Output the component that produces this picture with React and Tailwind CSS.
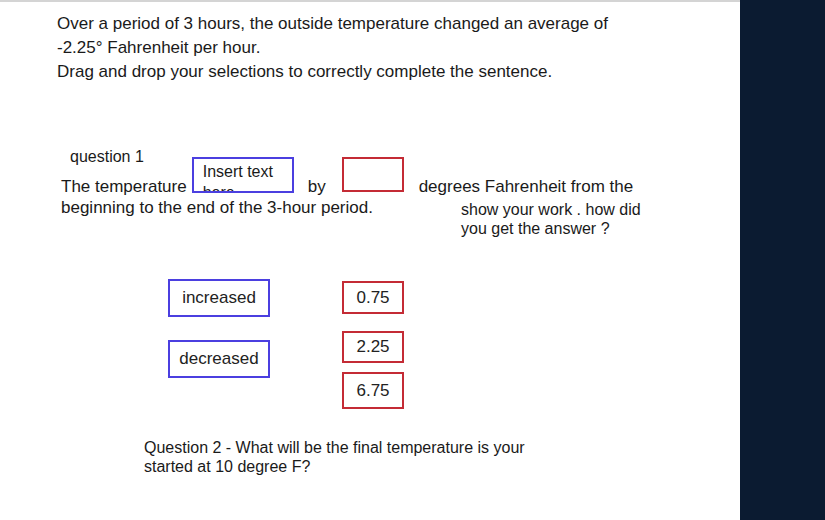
import React from "react";

const sans = { fontFamily: '"Liberation Sans", Arial, sans-serif' };

function Chip({ label, tone, className }) {
  const border = tone === "blue" ? "border-[#4b3fe0] w-[102px] h-[38px]" : "border-[#c42b35] w-[62px]";
  return (
    <div className={`flex items-center justify-center border-2 bg-white text-[17px] text-[#222] ${border} ${className || ""}`}>
      {label}
    </div>
  );
}

export default function App() {
  return (
    <div className="flex w-[825px] h-[520px] overflow-hidden bg-white text-[#1a1a1a]" style={sans}>
      <main className="flex flex-1 flex-col border-t-2 border-[#d4d4d4]">
        <div className="ml-[57px] mt-[10px] text-[17px] leading-[24px]">
          <p>Over a period of 3 hours, the outside temperature changed an average of</p>
          <p>-2.25° Fahrenheit per hour.</p>
          <p>Drag and drop your selections to correctly complete the sentence.</p>
        </div>

        {/* question 1 */}
        <section className="mt-[62px] ml-[61px]">
          <div className="flex items-start text-[17px] leading-[21px]">
            <div className="flex flex-col">
              <span className="ml-[9px] text-[16px]">question 1</span>
              <span className="mt-[9px]">The temperature</span>
            </div>
            <div className="ml-[5px] mt-[11px] w-[102px] h-[36px] overflow-hidden border-2 border-[#4b3fe0] pl-[9px] pt-[2px] text-[16px] leading-[21px]">
              Insert text here
            </div>
            <span className="ml-[14px] mt-[30px]">by</span>
            <div className="ml-[16px] mt-[11px] w-[62px] h-[35px] border-2 border-[#c42b35]" />
            <span className="ml-[15px] mt-[30px]">degrees Fahrenheit from the</span>
          </div>
          <div className="flex items-start">
            <p className="w-[400px] text-[17px] leading-[21px]">beginning to the end of the 3-hour period.</p>
            <p className="mt-[3px] text-[16px] leading-[19px]">
              show your work . how did
              <br />
              you get the answer ?
            </p>
          </div>
        </section>

        {/* answer choices */}
        <section className="mt-[41px] ml-[168px] flex items-start gap-[72px]">
          <div className="flex flex-col gap-[23px]">
            <Chip label="increased" tone="blue" />
            <Chip label="decreased" tone="blue" />
          </div>
          <div className="mt-[2px] flex flex-col">
            <Chip label="0.75" tone="red" className="h-[33px]" />
            <Chip label="2.25" tone="red" className="mt-[17px] h-[32px]" />
            <Chip label="6.75" tone="red" className="mt-[9px] h-[37px]" />
          </div>
        </section>

        <p className="mt-[29px] ml-[144px] text-[16px] leading-[19px]">
          Question 2 - What will be the final temperature is your
          <br />
          started at 10 degree F?
        </p>
      </main>
      <aside className="w-[85px] h-full bg-[#0b1b31]" />
    </div>
  );
}
